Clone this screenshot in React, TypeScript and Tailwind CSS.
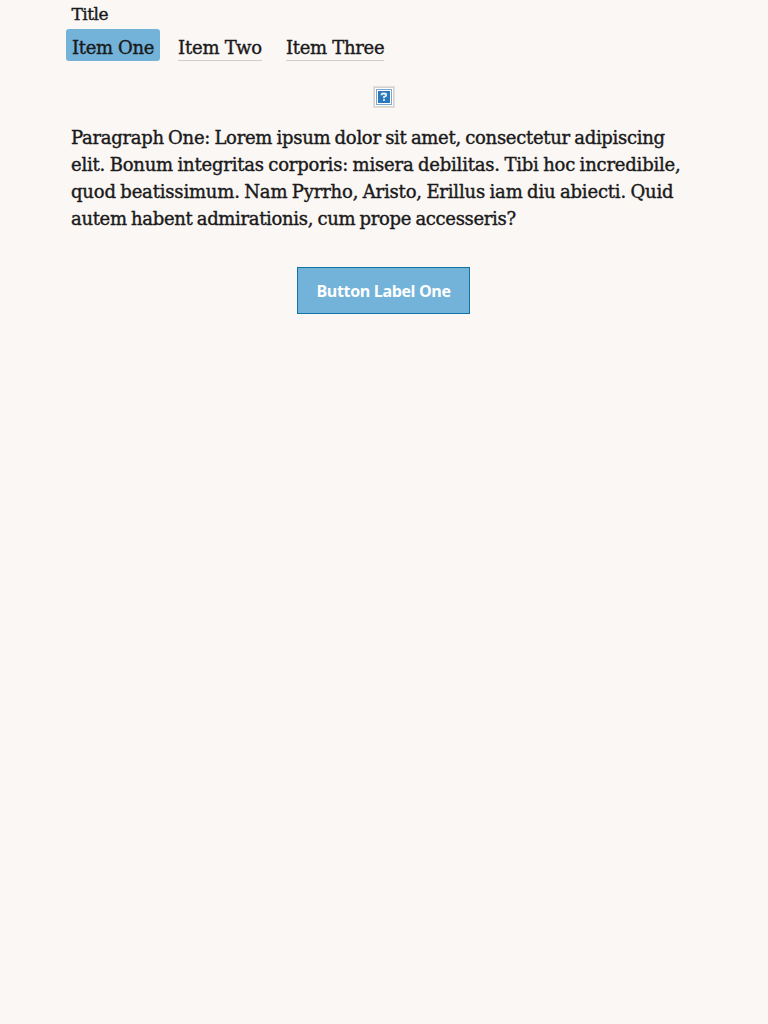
const items = [
  { label: "Item One", style: "mr-[18px] w-[94px] rounded-[3px] bg-[#73b3da] pl-[6px] tracking-[-0.35px]" },
  { label: "Item Two", style: "mr-[24px] w-[84px] border-b border-[#cfcdcb] tracking-[-0.2px]" },
  { label: "Item Three", style: "w-[98px] border-b border-[#cfcdcb] tracking-[-0.3px]" },
];

const lines = [
  { text: "Paragraph One: Lorem ipsum dolor sit amet, consectetur adipiscing", spacing: "tracking-[-0.295px]" },
  { text: "elit. Bonum integritas corporis: misera debilitas. Tibi hoc incredibile,", spacing: "tracking-[-0.2px]" },
  { text: "quod beatissimum. Nam Pyrrho, Aristo, Erillus iam diu abiecti. Quid", spacing: "tracking-[-0.18px]" },
  { text: "autem habent admirationis, cum prope accesseris?", spacing: "tracking-[-0.33px]" },
];

function MissingImage() {
  return (
    <svg width="22" height="22" viewBox="0 0 22 22" shapeRendering="crispEdges" role="img">
      <rect x="0" y="0" width="22" height="22" fill="#e2dfdc" />
      <rect x="1" y="1" width="20" height="20" fill="#d4d2d0" />
      <rect x="2" y="2" width="18" height="18" fill="#fff" />
      <rect x="3" y="3" width="16" height="16" fill="#7ea6d3" />
      <rect x="4" y="4" width="14" height="14" fill="#fff" />
      <rect x="5" y="5" width="12" height="12" fill="#2b78bd" />
      <path
        d="M8.6 9.3V8.2Q9 7.5 10.8 7.5Q13.3 7.5 13.3 9Q13.3 10.3 11 10.9V12.2M11 13.2V15"
        fill="none"
        stroke="#e4f0fa"
        strokeWidth="1.8"
        shapeRendering="auto"
      />
    </svg>
  );
}

export default function App() {
  return (
    <main className="flex min-h-screen flex-col bg-[#fbf7f5] font-['DejaVu_Serif',serif] text-[#1a1a1a] [-webkit-text-stroke:0.4px_#1a1a1a]">
      <h1 className="pl-[71.5px] pt-[2px] text-[17px] leading-[24px] tracking-[-0.5px]">Title</h1>
      <nav className="flex pl-[66px] pt-[3px] text-[18px] leading-[31px]">
        {items.map((item) => (
          <a key={item.label} className={`h-[32px] whitespace-nowrap pt-[3px] ${item.style}`}>
            {item.label}
          </a>
        ))}
      </nav>
      <div className="mt-[25px] flex h-[22px] justify-center">
        <MissingImage />
      </div>
      <p className="mt-[16px] pl-[71px] text-[18px] leading-[27px] [word-spacing:-1px]">
        {lines.map((line) => (
          <span key={line.text} className={`block whitespace-nowrap ${line.spacing}`}>
            {line.text}
          </span>
        ))}
      </p>
      <button className="ml-[297px] mt-[35px] h-[47px] w-[173px] border border-[#0f73a8] bg-[#73b3da] font-['Open_Sans',sans-serif] text-[16px] font-bold tracking-[-0.35px] text-white [-webkit-text-stroke:0]">
        Button Label One
      </button>
    </main>
  );
}
